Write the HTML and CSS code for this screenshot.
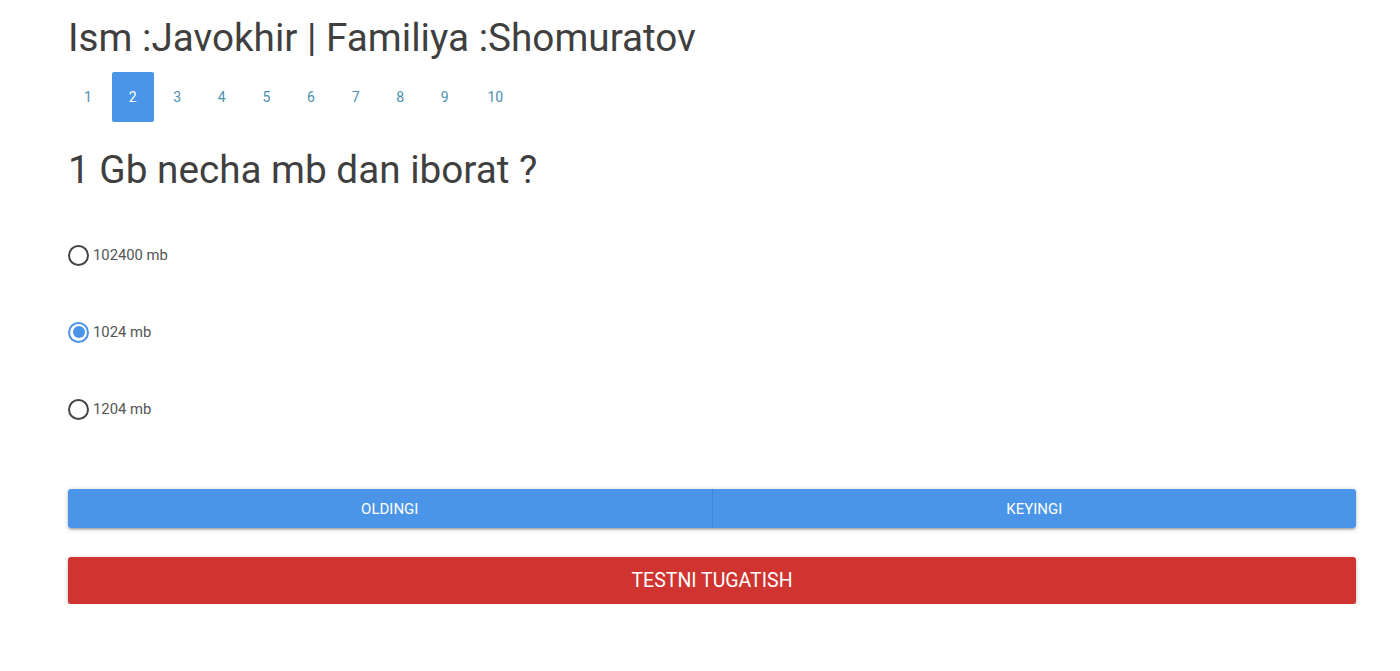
FILE: index.html
```html
<!DOCTYPE html>
<html lang="uz">
<head>
  <meta charset="UTF-8">
  <meta name="viewport" content="width=device-width, initial-scale=1.0">
  <title>Test</title>
  <link rel="stylesheet" href="styles.css">
</head>
<body>
  <div class="container">
    <h1 class="student">Ism :Javokhir | Familiya :Shomuratov</h1>

    <ul class="pagination">
      <li><a href="#">1</a></li>
      <li class="active"><a href="#">2</a></li>
      <li><a href="#">3</a></li>
      <li><a href="#">4</a></li>
      <li><a href="#">5</a></li>
      <li><a href="#">6</a></li>
      <li><a href="#">7</a></li>
      <li><a href="#">8</a></li>
      <li><a href="#">9</a></li>
      <li><a href="#">10</a></li>
    </ul>

    <h2 class="question">1 Gb necha mb dan iborat ?</h2>

    <form class="answers">
      <label class="answer">
        <input type="radio" name="answer">
        <span class="dot"></span>
        <span>102400 mb</span>
      </label>
      <label class="answer">
        <input type="radio" name="answer" checked>
        <span class="dot"></span>
        <span>1024 mb</span>
      </label>
      <label class="answer">
        <input type="radio" name="answer">
        <span class="dot"></span>
        <span>1204 mb</span>
      </label>
    </form>

    <div class="nav-buttons">
      <button class="btn btn-blue">OLDINGI</button>
      <button class="btn btn-blue">KEYINGI</button>
    </div>

    <button class="btn btn-red btn-finish">TESTNI TUGATISH</button>
  </div>
</body>
</html>
```

FILE: styles.css
```css
body {
  font-family: Roboto, "Noto Sans", sans-serif;
  margin: 0;
  background-color: #fff;
  color: #444;
}

.container {
  margin: 0 44px 0 68px;
  padding-top: 14px;
}

.student {
  font-size: 38.7px;
  font-weight: 400;
  line-height: 48px;
  margin: 0;
  color: #3f3f3f;
}

.pagination {
  list-style: none;
  display: flex;
  margin: 10px 0 0;
  padding: 0;
}

.pagination li {
  width: 42px;
  height: 50px;
  margin-right: 2.6px;
  border-radius: 2px;
  display: flex;
  align-items: center;
  justify-content: center;
}

.pagination li:first-child {
  margin-left: -1px;
}

.pagination li:last-child {
  padding-left: 6px;
}

.pagination a {
  color: #4a8fb0;
  font-size: 14px;
  text-decoration: none;
}

.pagination .active {
  background-color: #4a95e8;
}

.pagination .active a {
  color: #fff;
}

.question {
  font-size: 38.7px;
  font-weight: 400;
  line-height: 48px;
  margin: 24px 0 0;
  color: #3f3f3f;
}

.answers {
  margin-top: 51px;
  display: flex;
  flex-direction: column;
  gap: 57px;
}

.answer {
  display: flex;
  align-items: center;
  height: 20px;
  font-size: 14.8px;
  color: #555;
  cursor: pointer;
}

.answer input {
  display: none;
}

.answer .dot {
  width: 17px;
  height: 17px;
  border: 2px solid #444;
  border-radius: 50%;
  margin-right: 4px;
  position: relative;
  flex-shrink: 0;
}

.answer input:checked + .dot {
  border-color: #4a95e8;
}

.answer input:checked + .dot::after {
  content: "";
  position: absolute;
  left: 2.5px;
  top: 2.5px;
  width: 12px;
  height: 12px;
  border-radius: 50%;
  background-color: #4a95e8;
}

.nav-buttons {
  display: flex;
  margin-top: 70px;
  border-radius: 3px;
  box-shadow: 0 2px 2px rgba(0, 0, 0, 0.14), 0 3px 1px -2px rgba(0, 0, 0, 0.12), 0 1px 5px rgba(0, 0, 0, 0.2);
  overflow: hidden;
}

.btn {
  font-family: inherit;
  border: none;
  color: #fff;
  cursor: pointer;
  text-transform: uppercase;
}

.btn-blue {
  flex: 1;
  height: 39px;
  font-size: 15px;
  background-color: #4a95e8;
}

.btn-blue + .btn-blue {
  border-left: 1px solid #3f86d4;
}

.btn-red {
  display: block;
  width: 100%;
  height: 47px;
  margin-top: 29px;
  font-size: 19.5px;
  border-radius: 3px;
  background-color: #cf3430;
  box-shadow: 0 2px 2px rgba(0, 0, 0, 0.14), 0 3px 1px -2px rgba(0, 0, 0, 0.12), 0 1px 5px rgba(0, 0, 0, 0.2);
}
```
